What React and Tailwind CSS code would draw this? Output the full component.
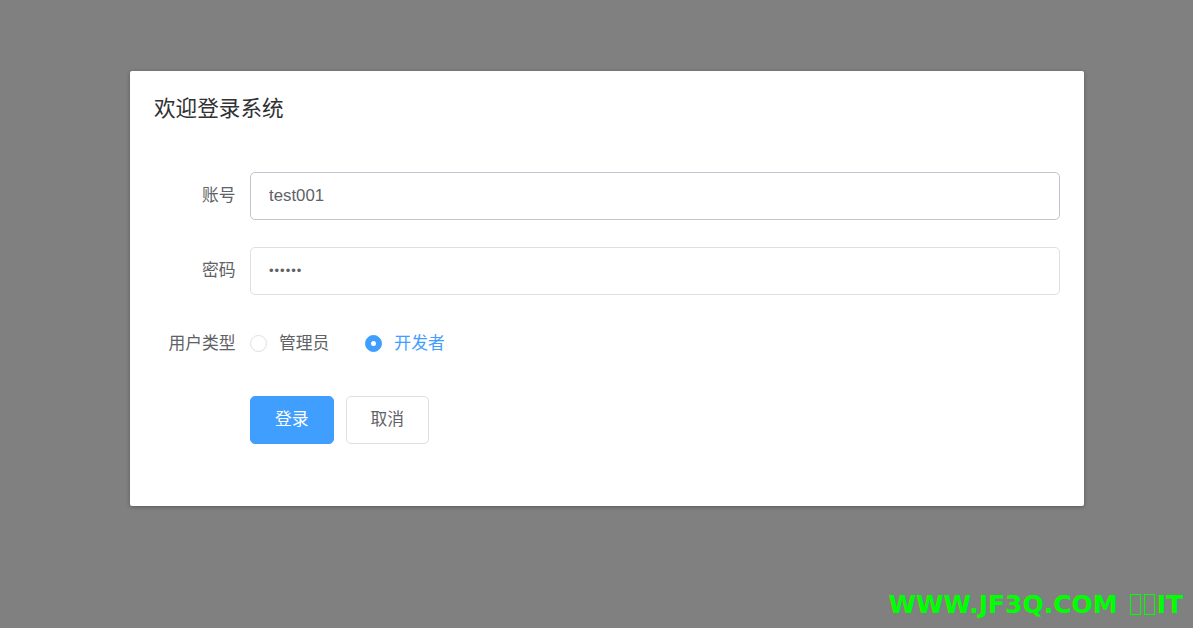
import { useState } from 'react'

const font = { fontFamily: '"Liberation Sans", "Noto Sans CJK SC", sans-serif' }

function Radio({ checked, label, onClick }) {
  return (
    <label onClick={onClick} className="flex items-center mr-[36px] cursor-pointer select-none">
      <span
        className={`w-[17px] h-[17px] rounded-full border flex items-center justify-center ${
          checked ? 'bg-[#409eff] border-[#409eff]' : 'bg-white border-[#dcdfe6]'
        }`}
      >
        {checked && <span className="w-[5px] h-[5px] rounded-full bg-white" />}
      </span>
      <span className={`ml-[12px] text-[16.8px] ${checked ? 'text-[#409eff]' : 'text-[#606266]'}`}>{label}</span>
    </label>
  )
}

export default function App() {
  const [role, setRole] = useState('dev')

  return (
    <div className="relative w-full h-[628px] bg-[#808080] overflow-hidden" style={font}>
      {/* Dialog */}
      <div className="absolute left-[130px] top-[71px] w-[954px] bg-white rounded-[2px] shadow-[0_1px_4px_rgba(0,0,0,0.3)]">
        <div className="px-[24px] pt-[24px] pb-[12px]">
          <h2 className="text-[21.6px] leading-[28.8px] text-[#303133]">欢迎登录系统</h2>
        </div>
        <div className="px-[24px] pt-[36px] pb-[36px]">
          {/* 账号 */}
          <div className="flex items-center mb-[27px]">
            <label className="w-[96px] pr-[14.4px] text-right text-[16.8px] text-[#606266]">账号</label>
            <input
              defaultValue="test001"
              className="flex-1 h-[48px] px-[18px] border border-[#c0c4cc] rounded-[5px] text-[16.8px] text-[#606266] outline-none"
            />
          </div>
          {/* 密码 */}
          <div className="flex items-center mb-[27px]">
            <label className="w-[96px] pr-[14.4px] text-right text-[16.8px] text-[#606266]">密码</label>
            <input
              type="password"
              defaultValue="123456"
              className="flex-1 h-[48px] px-[18px] border border-[#dcdfe6] rounded-[5px] text-[13px] tracking-[1px] text-[#606266] outline-none"
            />
          </div>
          {/* 用户类型 */}
          <div className="flex items-center h-[44px] mb-[30px]">
            <label className="w-[96px] pr-[14.4px] text-right text-[16.8px] text-[#606266]">用户类型</label>
            <div className="flex items-center">
              <Radio label="管理员" checked={role === 'admin'} onClick={() => setRole('admin')} />
              <Radio label="开发者" checked={role === 'dev'} onClick={() => setRole('dev')} />
            </div>
          </div>
          {/* Buttons */}
          <div className="flex items-center pl-[96px] mb-[26px]">
            <button className="h-[48px] px-[24px] rounded-[5px] bg-[#409eff] border border-[#409eff] text-white text-[16.8px]">
              登录
            </button>
            <button className="ml-[12px] h-[48px] px-[24px] rounded-[5px] bg-white border border-[#dcdfe6] text-[#606266] text-[16.8px]">
              取消
            </button>
          </div>
        </div>
      </div>

      {/* Watermark */}
      <div
        className="absolute right-[10px] bottom-[5px] flex items-center text-[25px] font-bold text-[#00ff00]"
        style={{ fontFamily: '"DejaVu Sans", sans-serif' }}
      >
        <span>WWW.JF3Q.COM</span>
        <span className="ml-[12px] inline-block w-[11px] h-[21px] border border-[#00ff00]" />
        <span className="ml-[3px] inline-block w-[11px] h-[21px] border border-[#00ff00]" />
        <span className="ml-[2px]">IT</span>
      </div>
    </div>
  )
}
